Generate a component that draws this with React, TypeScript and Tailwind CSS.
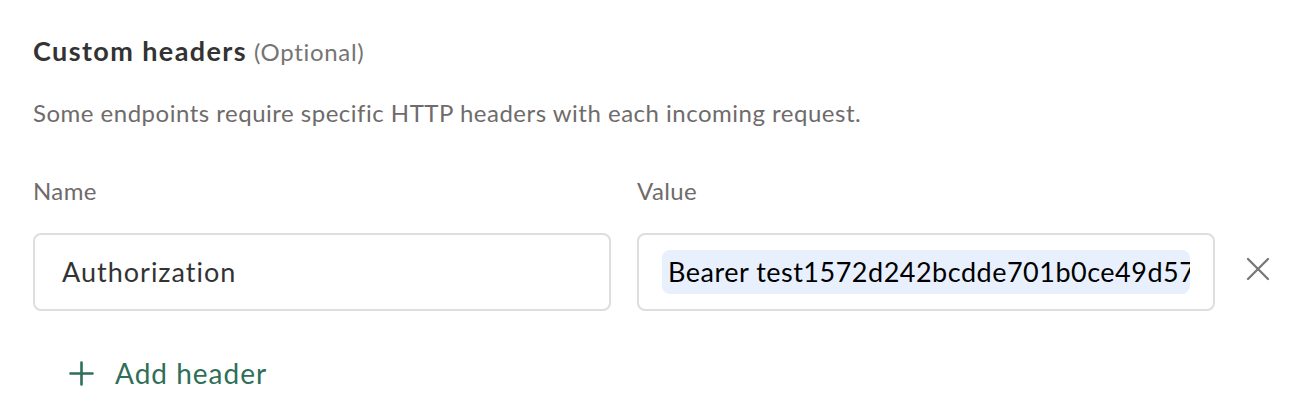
import React from 'react';
import { X } from 'lucide-react';

export default function App() {
  return (
    <div className="w-[1308px] h-[410px] bg-white px-[33px] pt-[36px]" style={{ fontFamily: 'Lato, "Noto Sans", sans-serif' }}>
      <h2 className="text-[27px] leading-[30px] text-[#333333]">
        <span className="font-bold tracking-[1.4px]">Custom headers</span>{' '}
        <span className="text-[24px] tracking-[0.7px] text-[#777474]">(Optional)</span>
      </h2>
      <p className="mt-[32px] text-[24px] leading-[28px] tracking-[0.5px] text-[#6f6b6b]">
        Some endpoints require specific HTTP headers with each incoming request.
      </p>

      <div className="mt-[50px] flex items-start">
        <div className="w-[578px] shrink-0">
          <div className="text-[24px] leading-[28px] tracking-[0.4px] text-[#6f6b6b]">Name</div>
          <div className="mt-[28px] h-[78px] rounded-[8px] border-2 border-[#dedede] flex items-center px-[27px]">
            <span className="text-[27px] tracking-[1px] text-[#333333]">Authorization</span>
          </div>
        </div>
        <div className="w-[578px] shrink-0 ml-[26px]">
          <div className="text-[24px] leading-[28px] tracking-[0.4px] text-[#6f6b6b]">Value</div>
          <div className="mt-[28px] h-[78px] rounded-[8px] border-2 border-[#dedede] flex items-center px-[23px]">
            <div className="w-full h-[44px] rounded-[8px] bg-[#e8f0fe] flex items-center px-[6px] overflow-hidden">
              <span className="text-[27px] tracking-[0.5px] text-black whitespace-nowrap">Bearer test1572d242bcdde701b0ce49d57</span>
            </div>
          </div>
        </div>
        <button className="mt-[72px] ml-[23px] shrink-0 text-[#7a7777]">
          <X size={40} strokeWidth={1.4} />
        </button>
      </div>

      <button className="mt-[48px] ml-[36px] flex items-center gap-[21px] text-[#2f6f58]">
        <svg width="25" height="25" viewBox="0 0 25 25" fill="none" stroke="currentColor" strokeWidth="2.6" strokeLinecap="round">
          <path d="M12.5 1.5v22M1.5 12.5h22" />
        </svg>
        <span className="text-[28px] leading-[28px] tracking-[1px]">Add header</span>
      </button>
    </div>
  );
}
